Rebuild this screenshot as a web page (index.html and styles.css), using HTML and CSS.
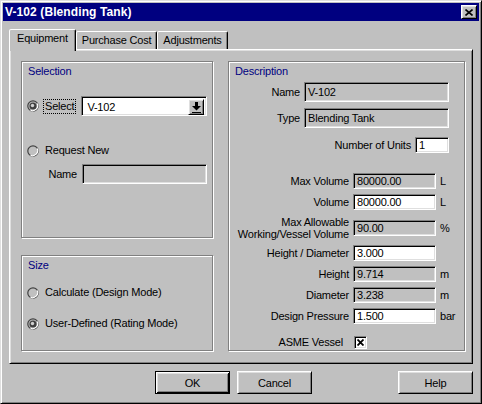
FILE: index.html
```html
<!DOCTYPE html>
<html lang="en">
<head>
  <meta charset="UTF-8" />
  <title>V-102 (Blending Tank)</title>
  <link rel="stylesheet" href="styles.css">
</head>
<body>

  <div class="window">
    <div class="titlebar">
      <span class="title">V-102 (Blending Tank)</span>
      <span class="close-btn raised">
        <svg width="8" height="7" viewBox="0 0 8 7"><path d="M0.5 0.5 L7.5 6.5 M7.5 0.5 L0.5 6.5" stroke="#000" stroke-width="1.6" fill="none"/></svg>
      </span>
    </div>

    <div class="content">
      <div class="tabs">
        <div class="tab active">Equipment</div>
        <div class="tab">Purchase Cost</div>
        <div class="tab">Adjustments</div>
      </div>

      <div class="panel">
        <div class="left-col">
          <div class="group selection">
            <div class="group-title">Selection</div>

            <div class="radio-row select-row">
              <svg class="radio" width="12" height="12" viewBox="0 0 12 12">
                <circle cx="6" cy="6" r="5.2" fill="none" stroke="#404040" stroke-width="1.2"/>
                <path d="M10.3 3.5 A5.2 5.2 0 0 1 3.5 10.3" fill="none" stroke="#fff" stroke-width="1.2"/>
                <circle cx="6" cy="6" r="3.6" fill="#404040"/>
                <circle cx="5.5" cy="5.5" r="1.7" fill="#d0d0d0"/>
              </svg>
              <span class="radio-label focus">Select</span>
              <div class="combo sunken">
                <span class="combo-text">V-102</span>
                <span class="combo-btn raised">
                  <svg width="9" height="11" viewBox="0 0 9 11">
                    <rect x="3" y="0" width="3" height="4" fill="#000"/>
                    <polygon points="0,4 9,4 4.5,8.5" fill="#000"/>
                    <rect x="0" y="10" width="9" height="1" fill="#000"/>
                  </svg>
                </span>
              </div>
            </div>

            <div class="radio-row request-row">
              <svg class="radio" width="12" height="12" viewBox="0 0 12 12">
                <circle cx="6" cy="6" r="5.2" fill="none" stroke="#404040" stroke-width="1.2"/>
                <path d="M10.3 3.5 A5.2 5.2 0 0 1 3.5 10.3" fill="none" stroke="#fff" stroke-width="1.2"/>
              </svg>
              <span class="radio-label">Request New</span>
            </div>

            <div class="name-row">
              <span class="name-label">Name</span>
              <div class="field sunken disabled"></div>
            </div>
          </div>

          <div class="group size">
            <div class="group-title">Size</div>

            <div class="radio-row calc-row">
              <svg class="radio" width="12" height="12" viewBox="0 0 12 12">
                <circle cx="6" cy="6" r="5.2" fill="none" stroke="#404040" stroke-width="1.2"/>
                <path d="M10.3 3.5 A5.2 5.2 0 0 1 3.5 10.3" fill="none" stroke="#fff" stroke-width="1.2"/>
              </svg>
              <span class="radio-label">Calculate (Design Mode)</span>
            </div>

            <div class="radio-row user-row">
              <svg class="radio" width="12" height="12" viewBox="0 0 12 12">
                <circle cx="6" cy="6" r="5.2" fill="none" stroke="#404040" stroke-width="1.2"/>
                <path d="M10.3 3.5 A5.2 5.2 0 0 1 3.5 10.3" fill="none" stroke="#fff" stroke-width="1.2"/>
                <circle cx="6" cy="6" r="3.6" fill="#404040"/>
                <circle cx="5.5" cy="5.5" r="1.7" fill="#d0d0d0"/>
              </svg>
              <span class="radio-label">User-Defined (Rating Mode)</span>
            </div>
          </div>
        </div>

        <div class="group description">
          <div class="group-title">Description</div>

          <div class="desc-top">
            <div class="info-grid">
              <span class="label">Name</span>
              <div class="field sunken disabled tall">V-102</div>
              <span class="label">Type</span>
              <div class="field sunken disabled tall">Blending Tank</div>
            </div>
            <div class="units-row">
              <span>Number of Units</span>
              <div class="field sunken units">1</div>
            </div>
          </div>

          <div class="data-grid">
            <span class="label">Max Volume</span>
            <div class="field sunken disabled">80000.00</div>
            <span class="unit">L</span>

            <span class="label">Volume</span>
            <div class="field sunken">80000.00</div>
            <span class="unit">L</span>

            <span class="label two-line">Max Allowable<br>Working/Vessel Volume</span>
            <div class="field sunken disabled">90.00</div>
            <span class="unit">%</span>

            <span class="label">Height / Diameter</span>
            <div class="field sunken">3.000</div>
            <span class="unit"></span>

            <span class="label">Height</span>
            <div class="field sunken disabled">9.714</div>
            <span class="unit">m</span>

            <span class="label">Diameter</span>
            <div class="field sunken disabled">3.238</div>
            <span class="unit">m</span>

            <span class="label">Design Pressure</span>
            <div class="field sunken">1.500</div>
            <span class="unit">bar</span>

            <span class="label asme">ASME Vessel</span>
            <span class="checkbox sunken">
              <svg width="7" height="7" viewBox="0 0 7 7"><path d="M0.5 0.5 L6.5 6.5 M6.5 0.5 L0.5 6.5" stroke="#000" stroke-width="1.8" fill="none"/></svg>
            </span>
            <span class="unit"></span>
          </div>
        </div>
      </div>

      <div class="buttons">
        <div class="btn default">OK</div>
        <div class="btn raised">Cancel</div>
        <div class="btn raised help">Help</div>
      </div>
    </div>
  </div>

</body>
</html>
```

FILE: styles.css
```css
* {
  box-sizing: border-box;
}

body {
  margin: 0;
  font-family: "Liberation Sans", Arial, sans-serif;
  font-size: 11px;
  letter-spacing: -0.2px;
  color: #000;
  background: #c0c0c0;
}

/* 3d borders */
.raised {
  background: #c0c0c0;
  border: 1px solid;
  border-color: #fff #000 #000 #fff;
  box-shadow: inset 1px 1px #dfdfdf, inset -1px -1px #808080;
}

.sunken {
  background: #fff;
  border: 1px solid;
  border-color: #808080 #fff #fff #808080;
  box-shadow: inset 1px 1px #000, inset -1px -1px #dfdfdf;
}

.window {
  width: 482px;
  height: 404px;
  background: #c0c0c0;
  border: 1px solid;
  border-color: #dfdfdf #000 #000 #dfdfdf;
  box-shadow: inset 1px 1px #fff, inset -1px -1px #808080;
  padding: 2px;
}

.titlebar {
  height: 18px;
  background: #000080;
  color: #fff;
  display: flex;
  align-items: center;
  justify-content: space-between;
  padding: 0 2px;
}

.title {
  font-weight: bold;
  font-size: 12px;
  letter-spacing: 0.1px;
}

.close-btn {
  width: 16px;
  height: 14px;
  display: flex;
  align-items: center;
  justify-content: center;
}

.content {
  padding: 8px 6px 0;
}

/* tabs */
.tabs {
  display: flex;
  align-items: flex-end;
  height: 20px;
  position: relative;
  z-index: 1;
}

.tab {
  height: 18px;
  padding: 0 5px;
  line-height: 16px;
  background: #c0c0c0;
  border: 1px solid;
  border-bottom: none;
  border-color: #fff #000 transparent #fff;
  border-radius: 2px 2px 0 0;
  box-shadow: inset -1px 0 #808080;
}

.tab.active {
  height: 22px;
  margin-bottom: -2px;
  padding: 0 7px;
}

.panel {
  display: grid;
  grid-template-columns: 192px 237px;
  column-gap: 15px;
  padding: 11px 7px 12px 11px;
  background: #c0c0c0;
  border: 1px solid;
  border-color: #fff #000 #000 #fff;
  box-shadow: inset 1px 1px #dfdfdf, inset -1px -1px #808080;
}

.left-col {
  display: flex;
  flex-direction: column;
  gap: 17px;
}

/* group boxes */
.group {
  border: 1px solid #808080;
  box-shadow: 1px 1px #fff, inset 1px 1px #fff;
  padding: 3px 5px;
}

.selection {
  height: 177px;
}

.size {
  height: 96px;
}

.description {
  padding-bottom: 0;
}

.group-title {
  color: #000080;
  line-height: 13px;
  padding-left: 1px;
}

.radio-row {
  display: flex;
  align-items: center;
  gap: 4px;
}

.radio {
  flex-shrink: 0;
}

.radio-label {
  border: 1px dotted transparent;
  padding: 0 1px;
  line-height: 13px;
}

.radio-label.focus {
  border-color: #000;
}

.select-row {
  margin-top: 18px;
  height: 20px;
}

.combo {
  display: flex;
  width: 129px;
  height: 20px;
  margin-left: 1px;
  padding: 2px;
}

.combo-text {
  flex: 1;
  padding-left: 3px;
  line-height: 16px;
}

.combo-btn {
  width: 16px;
  height: 16px;
  display: flex;
  align-items: center;
  justify-content: center;
}

.request-row {
  margin-top: 27px;
}

.name-row {
  display: flex;
  align-items: center;
  margin-top: 6px;
}

.name-label {
  width: 50px;
  text-align: right;
  margin-right: 5px;
}

.name-row .field {
  width: 125px;
  height: 20px;
}

.calc-row {
  margin-top: 13px;
}

.user-row {
  margin-top: 16px;
}

/* text fields */
.field {
  height: 16px;
  padding: 0 3px;
  line-height: 14px;
  white-space: nowrap;
}

.field.disabled {
  background: #c0c0c0;
}

.field.tall {
  height: 20px;
  line-height: 18px;
}

/* description */
.desc-top {
  width: 215px;
}

.info-grid {
  display: grid;
  grid-template-columns: 66px 145px;
  column-gap: 4px;
  row-gap: 6px;
  align-items: center;
  margin-top: 4px;
}

.label {
  text-align: right;
  white-space: nowrap;
}

.units-row {
  display: flex;
  justify-content: flex-end;
  align-items: center;
  gap: 4px;
  margin-top: 9px;
}

.field.units {
  width: 34px;
}

.data-grid {
  display: grid;
  grid-template-columns: 115px 83px auto;
  grid-template-rows: 16px 16px 25px 16px 16px 16px 16px 20px;
  column-gap: 4px;
  row-gap: 5px;
  align-items: center;
  margin-top: 20px;
}

.two-line {
  line-height: 12px;
}

.label.asme {
  align-self: end;
  line-height: 13px;
  padding-right: 6px;
}

.checkbox {
  align-self: end;
  width: 13px;
  height: 13px;
  margin-left: 1px;
  display: flex;
  align-items: center;
  justify-content: center;
}

/* dialog buttons */
.buttons {
  display: flex;
  gap: 7px;
  margin-top: 7px;
  padding-left: 146px;
}

.btn {
  width: 75px;
  height: 23px;
  display: flex;
  align-items: center;
  justify-content: center;
}

.btn.default {
  background: #c0c0c0;
  border: 1px solid #000;
  box-shadow: inset 1px 1px #fff, inset -1px -1px #000, inset 2px 2px #dfdfdf, inset -2px -2px #808080;
}

.btn.help {
  margin-left: auto;
}
```
